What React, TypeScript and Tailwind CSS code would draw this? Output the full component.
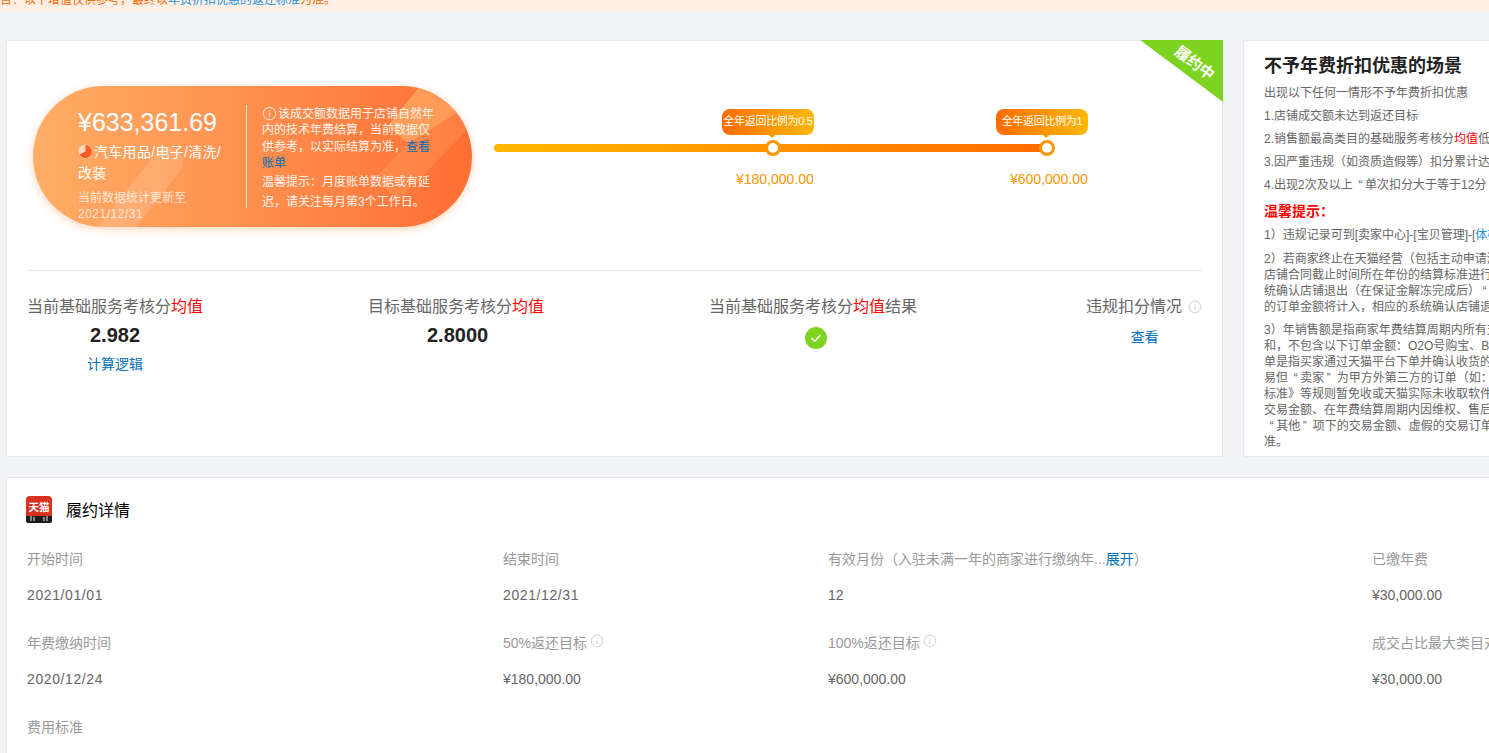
import React from "react";

const FONT = "font-['Liberation_Sans','Noto_Sans_CJK_SC',sans-serif]";

function Info({ className = "" }: { className?: string }) {
  return (
    <svg viewBox="0 0 16 16" className={className} fill="none">
      <circle cx="8" cy="8" r="6.6" stroke="currentColor" strokeWidth="1.4" />
      <rect x="7.2" y="7" width="1.6" height="4.6" fill="currentColor" />
      <rect x="7.2" y="4.4" width="1.6" height="1.6" fill="currentColor" />
    </svg>
  );
}

function Q({ children }: { children: React.ReactNode }) {
  return <span className="px-[2.5px]">{children}</span>;
}

function Pin({ left, label, amount }: { left: string; label: string; amount: string }) {
  return (
    <div className={`absolute top-0 ${left}`}>
      <div className="absolute left-[-8px] top-[-4px] box-border h-4 w-4 rounded-full border-[3px] border-[#ff9500] bg-white" />
      <div className="absolute left-[-51px] top-[-35px] flex h-[26px] w-[92px] items-center justify-center whitespace-nowrap rounded-lg bg-gradient-to-r from-[#ff6a00] to-[#ffb800] pb-[2px] text-[11px] tracking-[-0.3px] text-white">
        {label}
      </div>
      <div className="absolute left-[-4px] top-[-9px] h-0 w-0 border-x-[3px] border-t-[3px] border-x-transparent border-t-[#ff9a00]" />
      <div className="absolute left-[-37px] top-[25px] whitespace-nowrap text-[14px] leading-5 text-[#ff9500]">{amount}</div>
    </div>
  );
}

function Metric({ label, children, tail, className = "" }: { label: React.ReactNode; children: React.ReactNode; tail?: React.ReactNode; className?: string }) {
  return (
    <div className={`flex flex-col items-center ${className}`}>
      <div className="flex items-center text-[16px] leading-6 text-[#666]">
        <span>{label}</span>
        {tail}
      </div>
      {children}
    </div>
  );
}

function Field({ label, value, icon, date }: { label: React.ReactNode; value: string; icon?: boolean; date?: boolean }) {
  return (
    <div className="h-[84px]">
      <div className="flex h-5 items-center whitespace-nowrap text-[14px] text-[#999]">
        {label}
        {icon && <Info className="mb-[4px] ml-[3px] h-[14px] w-[14px] text-[#dcdcdc]" />}
      </div>
      <div className={`mt-4 h-5 whitespace-nowrap text-[14px] leading-5 text-[#666] ${date ? "tracking-[0.6px]" : ""}`}>{value}</div>
    </div>
  );
}

export default function App() {
  return (
    <div className={`${FONT} h-[753px] w-[1489px] overflow-hidden bg-[#f1f3f7]`}>
      <div className="h-3 overflow-hidden bg-[#fff0e6]">
        <div className="mt-[-9px] ml-[-12px] whitespace-nowrap text-[12px] leading-[18px] text-[#ff6a00]">
          公告：以下增值仅供参考，最终以<span className="text-[#1890e0]">年费折扣优惠的返还标准</span>为准。
        </div>
      </div>

      <div className="mt-7 flex w-[1600px] items-stretch pl-[6px]">
        <div className="relative box-border h-[417px] w-[1217px] shrink-0 border border-[#e6e8ec] bg-white px-5">
          <svg viewBox="0 0 83 62" className="absolute right-[-1px] top-[-1px] h-[62px] w-[83px]">
            <polygon points="0,0 83,0 83,62" fill="#7ed321" />
          </svg>
          <div className="absolute right-[5px] top-[12px] rotate-[37deg] whitespace-nowrap text-[15px] font-bold leading-5 text-white">履约中</div>

          <div className="mt-[45px] flex items-start">
            <div className="relative ml-[6px] box-border flex h-[141px] w-[439px] shrink-0 items-stretch overflow-hidden rounded-[72px] bg-gradient-to-r from-[#ffad66] to-[#ff6e33] pl-[45px] shadow-[0_2px_8px_rgba(255,170,110,0.5)]">
              <svg viewBox="0 0 439 141" className="absolute inset-0 h-full w-full">
                <line x1="73" y1="155" x2="135" y2="76" stroke="#ffffff" strokeOpacity="0.14" strokeWidth="30" strokeLinecap="round" />
                <polygon points="387,0 355,40 375,58 425,26 439,0" fill="#ffc27a" fillOpacity="0.5" />
                <polygon points="375,58 342,92 365,115 436,42 425,26" fill="#ffc27a" fillOpacity="0.2" />
              </svg>
              <div className="relative w-[168px] shrink-0 text-white">
                <div className="mt-[20px] text-[25px] leading-[32px]">¥633,361.69</div>
                <div className="mt-[4px] w-[152px] text-[14px] leading-[21px] tracking-[0.3px]">
                  <svg viewBox="0 0 16 16" className="mr-[1px] inline-block h-[15px] w-[15px] align-[-2px]">
                    <circle cx="8" cy="8" r="7.5" fill="#ffd9c2" />
                    <path d="M8 1 A7 7 0 1 1 1.6 11 L8 8 Z" fill="#ff5a24" />
                  </svg>
                  汽车用品/电子/清洗/改装
                </div>
                <div className="mt-[6px] text-[12px] leading-4 text-white/75">
                  当前数据统计更新至
                  <div className="tracking-[0.5px]">2021/12/31</div>
                </div>
              </div>
              <div className="relative my-[19px] w-px shrink-0 bg-white/70" />
              <div className="relative ml-[15px] mt-[20px] w-[176px] shrink-0 text-[12px] leading-[16.4px] text-white/90">
                <Info className="mr-[1px] inline-block h-[15px] w-[15px] align-[-3px] text-white/60" />
                该成交额数据用于店铺自然年内的技术年费结算，当前数据仅供参考，以实际结算为准，<span className="text-[#0070b8]">查看账单</span>
                <div className="leading-5">温馨提示：月度账单数据或有延迟，请关注每月第3个工作日。</div>
              </div>
            </div>

            <div className="relative ml-[22px] mt-[58px] h-2 w-[553px] shrink-0 rounded-full bg-gradient-to-r from-[#ffb800] to-[#ff6a00]">
              <Pin left="left-[279px]" label="全年返回比例为0.5" amount="¥180,000.00" />
              <Pin left="left-[553px]" label="全年返回比例为1" amount="¥600,000.00" />
            </div>
          </div>

          <div className="mt-[43px] h-px bg-[#e8e8e8]" />

          <div className="mt-6 flex gap-[165px]">
            <Metric label={<>当前基础服务考核分<span className="text-[#ff0000]">均值</span></>}>
              <div className="mt-[2px] text-[20px] font-bold leading-7 text-[#222]">2.982</div>
              <div className="mt-[5px] text-[14px] leading-5 text-[#0070b8]">计算逻辑</div>
            </Metric>
            <Metric label={<>目标基础服务考核分<span className="text-[#ff0000]">均值</span></>}>
              <div className="ml-[3px] mt-[2px] text-[20px] font-bold leading-7 text-[#222]">2.8000</div>
            </Metric>
            <Metric label={<>当前基础服务考核分<span className="text-[#ff0000]">均值</span>结果</>}>
              <svg viewBox="0 0 22 22" className="ml-[6px] mt-2 h-[22px] w-[22px]">
                <circle cx="11" cy="11" r="11" fill="#7ed321" />
                <path d="M6.5 11 L9.8 14.2 L15.5 8" fill="none" stroke="#fff" strokeWidth="1.6" />
              </svg>
            </Metric>
            <Metric
              className="ml-auto"
              label="违规扣分情况"
              tail={<Info className="ml-[6px] h-[14px] w-[14px] text-[#d9d9d9]" />}
            >
              <div className="mt-[8px] pl-[1px] text-[14px] leading-5 text-[#0070b8]">查看</div>
            </Metric>
          </div>
        </div>

        <div className="ml-5 box-border h-[417px] w-[320px] shrink-0 overflow-hidden border border-[#e6e8ec] bg-white pl-5 pt-[11px] text-[12px] leading-[23px] text-[#666]">
          <div className="text-[18px] font-bold leading-7 text-[#222]">不予年费折扣优惠的场景</div>
          <div className="mt-[2px] whitespace-nowrap">
            <div>出现以下任何一情形不予年费折扣优惠</div>
            <div>1.店铺成交额未达到返还目标</div>
            <div>2.销售额最高类目的基础服务考核分<span className="text-[#ff0000]">均值</span>低于目标值</div>
            <div>3.因严重违规（如资质造假等）扣分累计达到标准</div>
            <div>4.出现2次及以上 <Q>“</Q>单次扣分大于等于12分<Q>”</Q></div>
            <div className="mt-[1px] text-[14px] font-bold leading-[26px] text-[#ff0000]">温馨提示：</div>
            <div>1）违规记录可到[卖家中心]-[宝贝管理]-[<span className="text-[#1890d8]">体检中心</span>]</div>
          </div>
          <div className="mt-1 whitespace-nowrap leading-4">
            <div>2）若商家终止在天猫经营（包括主动申请清退</div>
            <div>店铺合同截止时间所在年份的结算标准进行结算</div>
            <div>统确认店铺退出（在保证金解冻完成后）<Q>“</Q></div>
            <div>的订单金额将计入，相应的系统确认店铺退出</div>
          </div>
          <div className="mt-[7px] whitespace-nowrap leading-4">
            <div>3）年销售额是指商家年费结算周期内所有支付</div>
            <div>和，不包含以下订单金额：O2O号购宝、B2B</div>
            <div>单是指买家通过天猫平台下单并确认收货的订单</div>
            <div>易但 <Q>“</Q>卖家<Q>”</Q> 为甲方外第三方的订单（如：</div>
            <div>标准》等规则暂免收或天猫实际未收取软件服务</div>
            <div>交易金额、在年费结算周期内因维权、售后退款</div>
            <div>&nbsp;<Q>“</Q>其他<Q>”</Q> 项下的交易金额、虚假的交易订单金额</div>
            <div>准。</div>
          </div>
        </div>
      </div>

      <div className="mt-5 ml-[6px] box-border h-[300px] w-[1600px] border border-[#e6e8ec] bg-white pl-[19px] pt-[18px]">
        <div className="flex h-[27px] items-center text-[16px] text-black">
          <svg viewBox="0 0 26 27" className="h-[27px] w-[26px] shrink-0">
            <rect x="0" y="0" width="26" height="27" rx="4" fill="#d9301f" />
            <path d="M0 20 H26 V25 Q26 27 24 27 H2 Q0 27 0 25 Z" fill="#1d1d1d" />
            <path d="M5 20 v5 M8 21 v4 M18 21 v4 M21 20 v5" stroke="#f2f2f2" strokeWidth="1" />
            <text x="13" y="15" textAnchor="middle" fontSize="10.5" fontWeight="700" fill="#fff">天猫</text>
          </svg>
          <span className="ml-[14px] pt-[2px]">履约详情</span>
        </div>
        <div className="ml-px mt-[26px] grid grid-cols-[476px_325px_544px_200px]">
          <Field label="开始时间" value="2021/01/01" date />
          <Field label="结束时间" value="2021/12/31" date />
          <Field
            label={<>有效月份（入驻未满一年的商家进行缴纳年...<span className="text-[#0070b8]">展开</span>）</>}
            value="12"
          />
          <Field label="已缴年费" value="¥30,000.00" />
          <Field label="年费缴纳时间" value="2020/12/24" date />
          <Field label="50%返还目标" value="¥180,000.00" icon />
          <Field label="100%返还目标" value="¥600,000.00" icon />
          <Field label="成交占比最大类目对应年费" value="¥30,000.00" />
          <Field label="费用标准" value="" />
        </div>
      </div>
    </div>
  );
}
